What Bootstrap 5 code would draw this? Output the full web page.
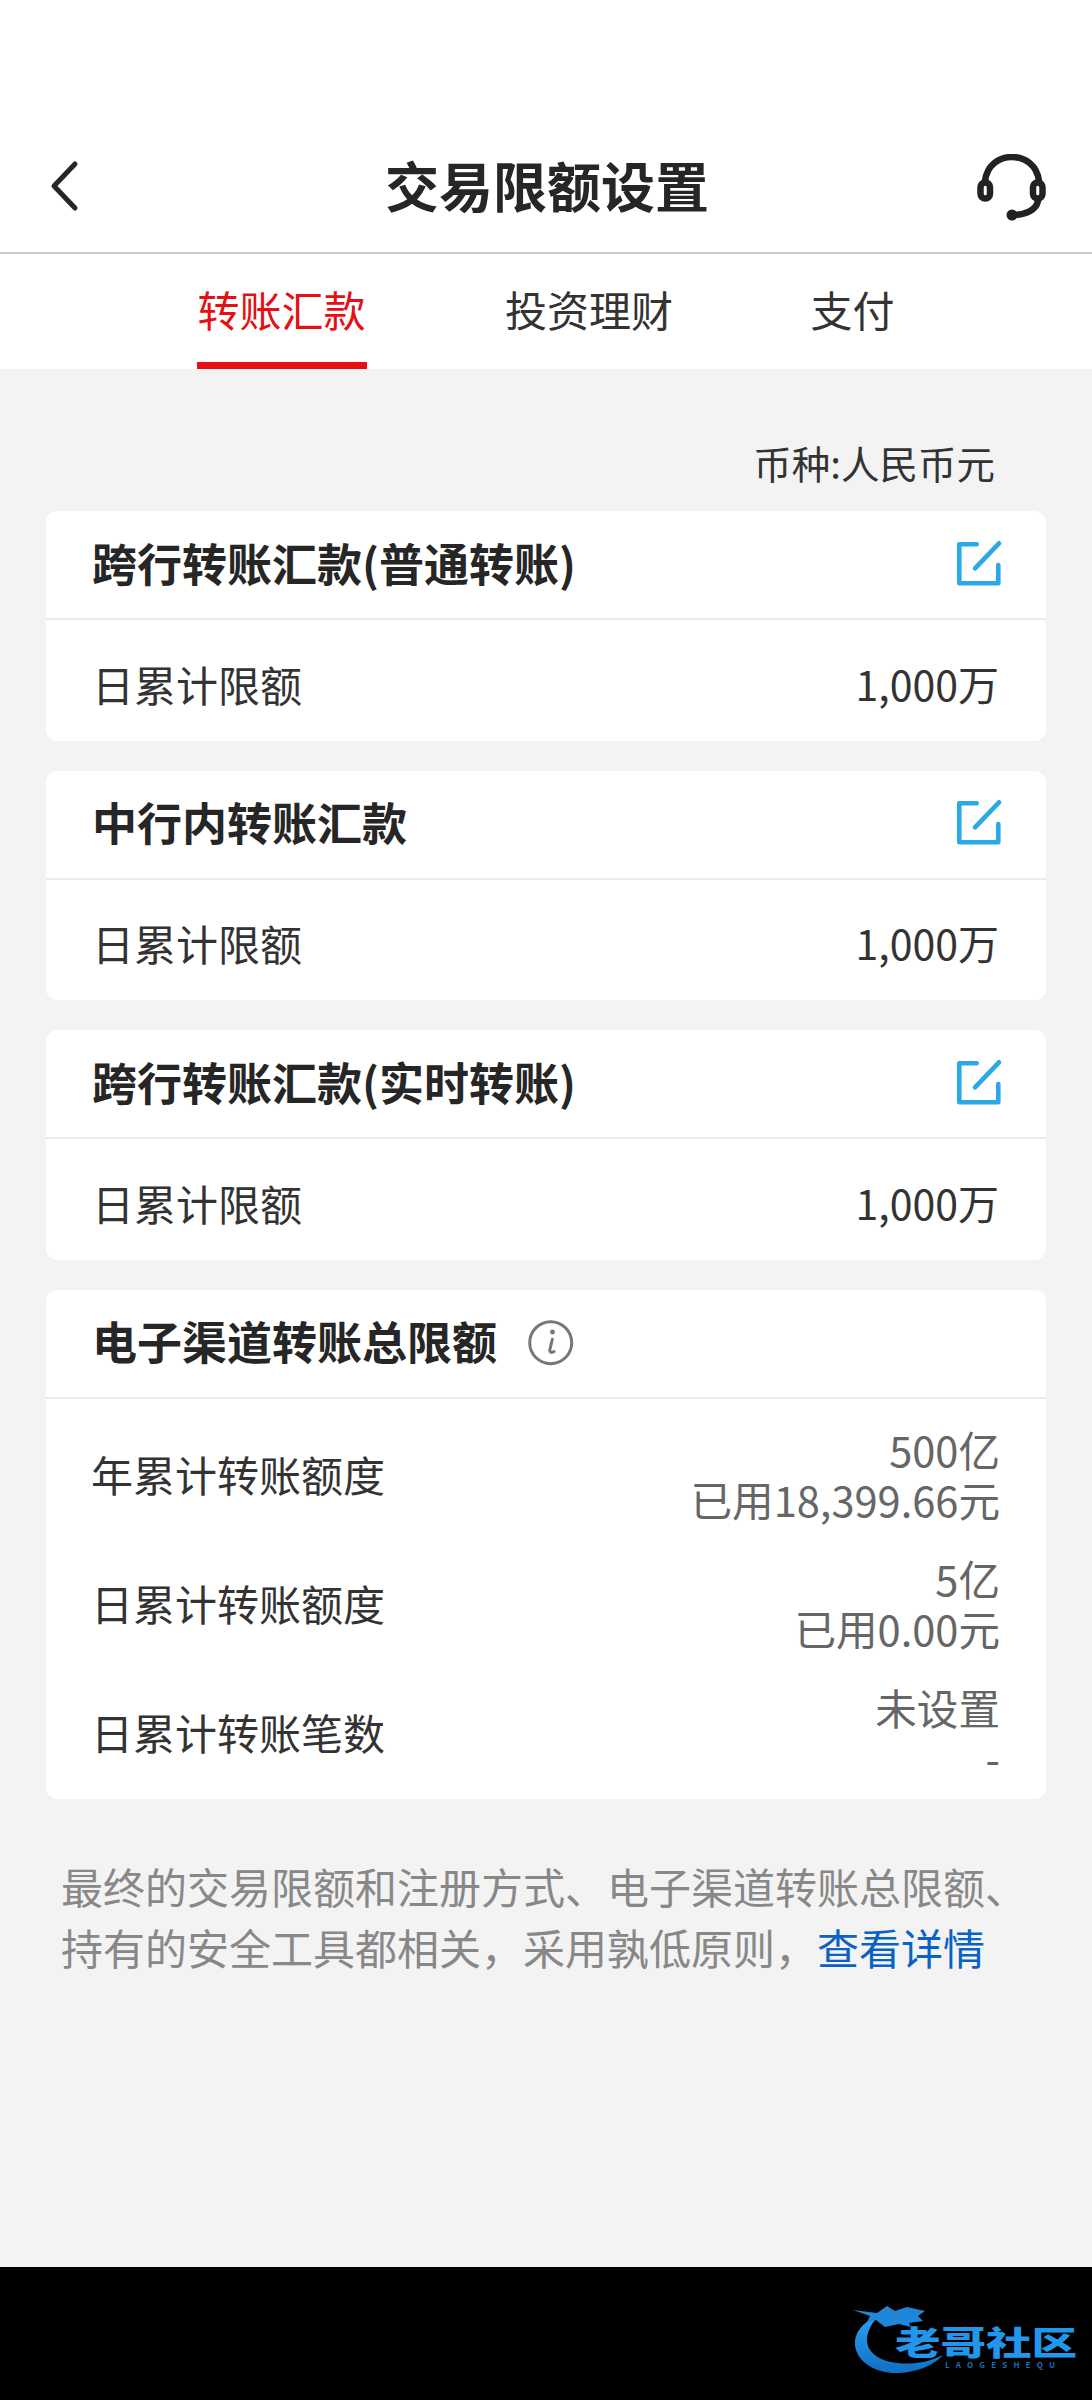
<!DOCTYPE html>
<html lang="zh-CN">
<head>
  <meta charset="UTF-8" />
  <meta name="viewport" content="width=device-width, initial-scale=1" />
  <title>交易限额设置</title>
  <link href="https://cdn.jsdelivr.net/npm/bootstrap@5.3.3/dist/css/bootstrap.min.css" rel="stylesheet" />
  <style>
    body {
      background: #f3f3f3;
      margin: 0;
      font-family: "Noto Sans CJK SC", "Noto Sans", sans-serif;
      color: #333;
    }

    .page-wrap {
      height: 2400px;
    }

    .top-bar {
      height: 254px;
      padding: 130px 44px 0 46px;
      border-bottom: 2px solid #ccc;
    }

    .top-side {
      width: 72px;
      flex: none;
    }

    .back-icon {
      margin: 30px 0 0 2px;
    }

    .help-icon {
      margin-top: 24px;
    }

    .top-title {
      font-size: 54px;
      line-height: 110px;
      font-weight: 700;
      color: #262626;
      margin: 0;
    }

    .tab-bar {
      height: 115px;
      gap: 137.5px;
    }

    .tab-item {
      font-size: 42px;
      line-height: 110px;
      height: 115px;
      color: #333;
      text-decoration: none;
      border-bottom: 7px solid transparent;
    }

    .tab-item.is-active {
      color: #e60f12;
      border-bottom-color: #e60f12;
      padding-right: 2px;
    }

    .currency-line {
      font-size: 38.5px;
      line-height: 60px;
      padding: 63px 97px 19px 0;
      text-align: right;
    }

    .limit-list {
      margin: 0 46px;
      gap: 30px;
    }

    .limit-card {
      border: 0;
      border-radius: 12px;
    }

    .limit-head {
      height: 109px;
      padding: 0 43px 4px 46px;
      background: #fff;
      border-bottom: 2px solid #ececec;
    }

    .edit-icon {
      margin-top: 2px;
    }

    .limit-name {
      font-size: 45px;
      font-weight: 700;
      color: #262626;
      line-height: 60px;
      margin: 0;
    }

    .limit-row {
      height: 120.5px;
      padding: 6px 47px 0 46px;
      font-size: 42px;
    }

    .limit-amount {
      color: #333;
      font-size: 41px;
    }

    .info-icon {
      margin-left: 30px;
      margin-top: 4px;
    }

    .total-body {
      padding: 25px 46px 17px 45px;
      gap: 29px;
    }

    .total-label {
      font-size: 42px;
    }

    .total-value {
      font-size: 41.6px;
      line-height: 50px;
      color: #666;
      text-align: right;
    }

    .foot-note {
      font-size: 42px;
      line-height: 61px;
      color: #888;
      padding: 56px 0 0 61px;
      white-space: nowrap;
    }

    .foot-note a {
      color: #0a62c4;
      text-decoration: none;
    }

    .bottom-strip {
      height: 133px;
      background: #000;
    }
  </style>
</head>
<body>
  <div class="page-wrap d-flex flex-column">
    <header class="top-bar bg-white d-flex align-items-start">
      <div class="top-side">
        <svg class="back-icon" width="40" height="60" viewBox="0 0 40 60" fill="none" stroke="#262626" stroke-width="5" stroke-linecap="round" stroke-linejoin="round">
          <path d="M27 4 6 26l21 22" />
        </svg>
      </div>
      <h1 class="top-title flex-grow-1 text-center">交易限额设置</h1>
      <div class="top-side">
        <svg class="help-icon" width="72" height="72" viewBox="0 0 72 72" fill="none" stroke="#222" stroke-width="6.5" stroke-linecap="round">
          <path d="M9 27C11 11 23 3 36 3s25 8 27 24" />
          <rect x="4.5" y="28.5" width="9.5" height="16" rx="4.75" />
          <rect x="57" y="28.5" width="9.5" height="16" rx="4.75" />
          <path d="M62 47c-2 9-12 14-26 14" />
          <circle cx="36" cy="61" r="5.5" fill="#222" stroke="none" />
        </svg>
      </div>
    </header>

    <nav class="tab-bar bg-white d-flex justify-content-center">
      <a class="tab-item is-active" href="#">转账汇款</a>
      <a class="tab-item" href="#">投资理财</a>
      <a class="tab-item" href="#">支付</a>
    </nav>

    <main class="flex-grow-1">
      <div class="currency-line">币种:人民币元</div>

      <div class="limit-list d-flex flex-column">
        <section class="card limit-card overflow-hidden">
          <div class="limit-head d-flex align-items-center justify-content-between">
            <h2 class="limit-name">跨行转账汇款(普通转账)</h2>
            <svg class="edit-icon" width="48" height="48" viewBox="0 0 48 48" fill="none" stroke="#29a9e6" stroke-width="4.6" stroke-linecap="round" stroke-linejoin="round">
              <path d="M21.7 4.3H4.3v39h39V25M20 28.3 44 3.3" />
            </svg>
          </div>
          <div class="limit-row bg-white d-flex align-items-center justify-content-between">
            <span>日累计限额</span><span class="limit-amount">1,000万</span>
          </div>
        </section>

        <section class="card limit-card overflow-hidden">
          <div class="limit-head d-flex align-items-center justify-content-between">
            <h2 class="limit-name">中行内转账汇款</h2>
            <svg class="edit-icon" width="48" height="48" viewBox="0 0 48 48" fill="none" stroke="#29a9e6" stroke-width="4.6" stroke-linecap="round" stroke-linejoin="round">
              <path d="M21.7 4.3H4.3v39h39V25M20 28.3 44 3.3" />
            </svg>
          </div>
          <div class="limit-row bg-white d-flex align-items-center justify-content-between">
            <span>日累计限额</span><span class="limit-amount">1,000万</span>
          </div>
        </section>

        <section class="card limit-card overflow-hidden">
          <div class="limit-head d-flex align-items-center justify-content-between">
            <h2 class="limit-name">跨行转账汇款(实时转账)</h2>
            <svg class="edit-icon" width="48" height="48" viewBox="0 0 48 48" fill="none" stroke="#29a9e6" stroke-width="4.6" stroke-linecap="round" stroke-linejoin="round">
              <path d="M21.7 4.3H4.3v39h39V25M20 28.3 44 3.3" />
            </svg>
          </div>
          <div class="limit-row bg-white d-flex align-items-center justify-content-between">
            <span>日累计限额</span><span class="limit-amount">1,000万</span>
          </div>
        </section>

        <section class="card limit-card overflow-hidden">
          <div class="limit-head d-flex align-items-center">
            <h2 class="limit-name">电子渠道转账总限额</h2>
            <svg class="info-icon" width="48" height="48" viewBox="0 0 48 48" fill="none" stroke="#777" stroke-width="3" stroke-linecap="round">
              <circle cx="23.7" cy="23.7" r="21" />
              <circle cx="25.5" cy="13" r="2.4" fill="#777" stroke="none" />
              <path d="M25.3 20.3 22.8 31c-.4 2 1.6 3.4 4.2 1.6" />
            </svg>
          </div>
          <div class="total-body bg-white d-flex flex-column">
            <div class="d-flex align-items-center justify-content-between">
              <span class="total-label">年累计转账额度</span>
              <div class="total-value">500亿<br />已用18,399.66元</div>
            </div>
            <div class="d-flex align-items-center justify-content-between">
              <span class="total-label">日累计转账额度</span>
              <div class="total-value">5亿<br />已用0.00元</div>
            </div>
            <div class="d-flex align-items-center justify-content-between">
              <span class="total-label">日累计转账笔数</span>
              <div class="total-value">未设置<br />-</div>
            </div>
          </div>
        </section>
      </div>

      <p class="foot-note mb-0">最终的交易限额和注册方式、电子渠道转账总限额、<br />持有的安全工具都相关，采用孰低原则，<a href="#">查看详情</a></p>
    </main>

    <footer class="bottom-strip d-flex justify-content-end">
      <svg width="272" height="133" viewBox="0 0 272 133">
        <defs>
          <linearGradient id="logoBlue" x1="0" y1="0" x2="0" y2="1">
            <stop offset="0" stop-color="#2da3f2" />
            <stop offset="1" stop-color="#0f6fc4" />
          </linearGradient>
        </defs>
        <path d="M58 48C42 56 34 66 35 78c2 18 22 29 44 28 18-1 34-7 44-18-14 7-30 10-46 8-18-2-30-11-30-23 0-9 5-18 14-26Z" fill="url(#logoBlue)" />
        <path d="M33 43l24 3 10-7 8 5 12-4 18 4-7 5 5 5-14 2 2 4-12-3-14 3-9-7-9 2 3-6-17-6Z" fill="#1f86d8" />
        <text transform="translate(75 88) scale(1.38 1)" font-size="33" font-weight="900" fill="#2196ea">老哥社区</text>
        <text x="125" y="101" font-size="8" font-weight="700" fill="#1d6fb4" textLength="110" lengthAdjust="spacing">LAOGESHEQU</text>
      </svg>
    </footer>
  </div>

  <script src="https://cdn.jsdelivr.net/npm/bootstrap@5.3.3/dist/js/bootstrap.bundle.min.js"></script>
</body>
</html>
